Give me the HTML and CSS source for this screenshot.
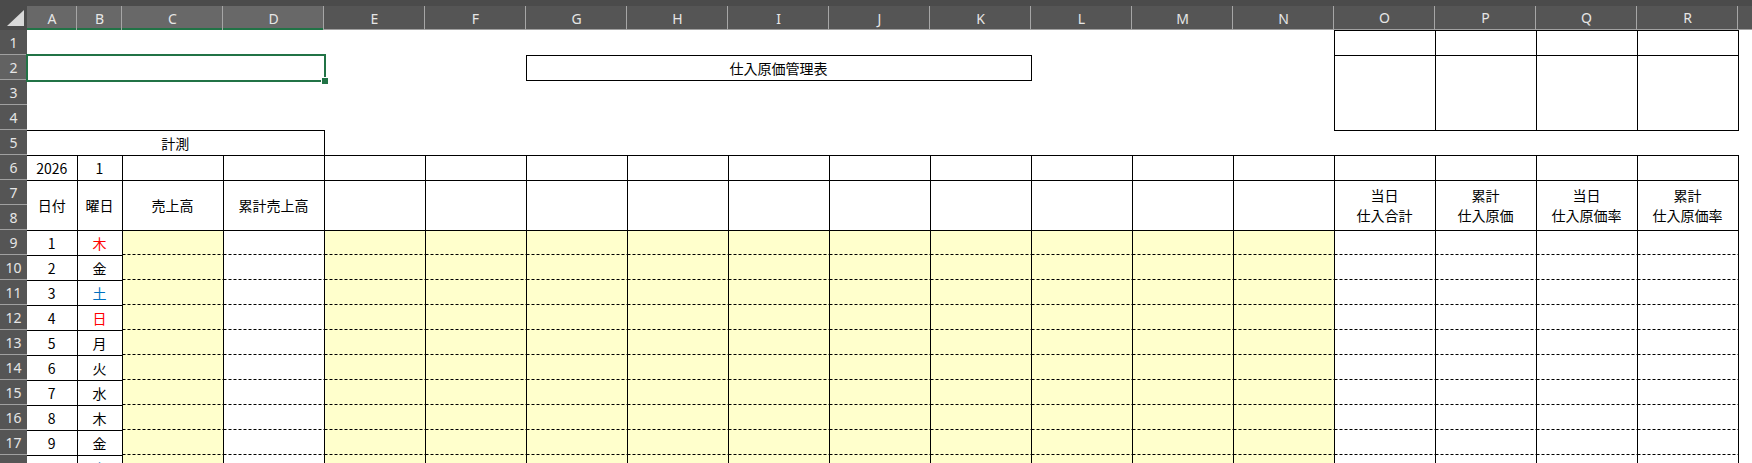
FILE: index.html
```html
<!DOCTYPE html>
<html lang="ja">
<head>
  <meta charset="UTF-8">
  <title>仕入原価管理表</title>
  <link rel="stylesheet" href="styles.css">
</head>
<body>
<div class="sheet">
  <table class="grid">
    <colgroup>
      <col class="c-hdr">
      <col class="c-a">
      <col class="c-b">
      <col class="c-wide" span="16">
      <col class="c-rest">
    </colgroup>
    <thead>
      <tr class="col-heads">
        <th class="corner"><span class="corner__tri"></span></th>
        <th class="col-head is-sel">A</th>
        <th class="col-head is-sel">B</th>
        <th class="col-head is-sel">C</th>
        <th class="col-head is-sel">D</th>
        <th class="col-head">E</th>
        <th class="col-head">F</th>
        <th class="col-head">G</th>
        <th class="col-head">H</th>
        <th class="col-head">I</th>
        <th class="col-head">J</th>
        <th class="col-head">K</th>
        <th class="col-head">L</th>
        <th class="col-head">M</th>
        <th class="col-head">N</th>
        <th class="col-head">O</th>
        <th class="col-head">P</th>
        <th class="col-head">Q</th>
        <th class="col-head">R</th>
        <th class="col-head col-head--end"></th>
      </tr>
    </thead>
    <tbody>
      <tr>
        <th class="row-head">1</th>
        <td colspan="14"></td>
        <td class="b"></td><td class="b"></td><td class="b"></td><td class="b"></td>
        <td></td>
      </tr>
      <tr>
        <th class="row-head is-sel">2</th>
        <td colspan="4"></td>
        <td colspan="2"></td>
        <td colspan="5" class="b">仕入原価管理表</td>
        <td colspan="3"></td>
        <td class="b" rowspan="3"></td><td class="b" rowspan="3"></td><td class="b" rowspan="3"></td><td class="b" rowspan="3"></td>
        <td></td>
      </tr>
      <tr>
        <th class="row-head">3</th>
        <td colspan="14"></td>
        <td></td>
      </tr>
      <tr>
        <th class="row-head">4</th>
        <td colspan="14"></td>
        <td></td>
      </tr>
      <tr>
        <th class="row-head">5</th>
        <td colspan="4" class="b nl">計測</td>
        <td colspan="14"></td>
        <td></td>
      </tr>
      <tr>
        <th class="row-head">6</th>
        <td class="b nl">2026</td>
        <td class="b">1</td>
        <td class="b"></td><td class="b"></td>
        <td class="b"></td><td class="b"></td><td class="b"></td><td class="b"></td><td class="b"></td>
        <td class="b"></td><td class="b"></td><td class="b"></td><td class="b"></td><td class="b"></td>
        <td class="b"></td><td class="b"></td><td class="b"></td><td class="b"></td>
        <td></td>
      </tr>
      <tr>
        <th class="row-head">7</th>
        <td rowspan="2" class="b nl">日付</td>
        <td rowspan="2" class="b">曜日</td>
        <td rowspan="2" class="b">売上高</td>
        <td rowspan="2" class="b">累計売上高</td>
        <td rowspan="2" class="b"></td><td rowspan="2" class="b"></td><td rowspan="2" class="b"></td><td rowspan="2" class="b"></td><td rowspan="2" class="b"></td>
        <td rowspan="2" class="b"></td><td rowspan="2" class="b"></td><td rowspan="2" class="b"></td><td rowspan="2" class="b"></td><td rowspan="2" class="b"></td>
        <td rowspan="2" class="b two-line">当日<br>仕入合計</td>
        <td rowspan="2" class="b two-line">累計<br>仕入原価</td>
        <td rowspan="2" class="b two-line">当日<br>仕入原価率</td>
        <td rowspan="2" class="b two-line">累計<br>仕入原価率</td>
        <td rowspan="2"></td>
      </tr>
      <tr>
        <th class="row-head">8</th>
      </tr>
      <tr>
        <th class="row-head">9</th>
        <td class="day">1</td><td class="wd red">木</td>
        <td class="in"></td><td class="out"></td>
        <td class="in"></td><td class="in"></td><td class="in"></td><td class="in"></td><td class="in"></td>
        <td class="in"></td><td class="in"></td><td class="in"></td><td class="in"></td><td class="in"></td>
        <td class="out"></td><td class="out"></td><td class="out"></td><td class="out"></td>
        <td></td>
      </tr>
      <tr>
        <th class="row-head">10</th>
        <td class="day">2</td><td class="wd">金</td>
        <td class="in"></td><td class="out"></td>
        <td class="in"></td><td class="in"></td><td class="in"></td><td class="in"></td><td class="in"></td>
        <td class="in"></td><td class="in"></td><td class="in"></td><td class="in"></td><td class="in"></td>
        <td class="out"></td><td class="out"></td><td class="out"></td><td class="out"></td>
        <td></td>
      </tr>
      <tr>
        <th class="row-head">11</th>
        <td class="day">3</td><td class="wd blue">土</td>
        <td class="in"></td><td class="out"></td>
        <td class="in"></td><td class="in"></td><td class="in"></td><td class="in"></td><td class="in"></td>
        <td class="in"></td><td class="in"></td><td class="in"></td><td class="in"></td><td class="in"></td>
        <td class="out"></td><td class="out"></td><td class="out"></td><td class="out"></td>
        <td></td>
      </tr>
      <tr>
        <th class="row-head">12</th>
        <td class="day">4</td><td class="wd red">日</td>
        <td class="in"></td><td class="out"></td>
        <td class="in"></td><td class="in"></td><td class="in"></td><td class="in"></td><td class="in"></td>
        <td class="in"></td><td class="in"></td><td class="in"></td><td class="in"></td><td class="in"></td>
        <td class="out"></td><td class="out"></td><td class="out"></td><td class="out"></td>
        <td></td>
      </tr>
      <tr>
        <th class="row-head">13</th>
        <td class="day">5</td><td class="wd">月</td>
        <td class="in"></td><td class="out"></td>
        <td class="in"></td><td class="in"></td><td class="in"></td><td class="in"></td><td class="in"></td>
        <td class="in"></td><td class="in"></td><td class="in"></td><td class="in"></td><td class="in"></td>
        <td class="out"></td><td class="out"></td><td class="out"></td><td class="out"></td>
        <td></td>
      </tr>
      <tr>
        <th class="row-head">14</th>
        <td class="day">6</td><td class="wd">火</td>
        <td class="in"></td><td class="out"></td>
        <td class="in"></td><td class="in"></td><td class="in"></td><td class="in"></td><td class="in"></td>
        <td class="in"></td><td class="in"></td><td class="in"></td><td class="in"></td><td class="in"></td>
        <td class="out"></td><td class="out"></td><td class="out"></td><td class="out"></td>
        <td></td>
      </tr>
      <tr>
        <th class="row-head">15</th>
        <td class="day">7</td><td class="wd">水</td>
        <td class="in"></td><td class="out"></td>
        <td class="in"></td><td class="in"></td><td class="in"></td><td class="in"></td><td class="in"></td>
        <td class="in"></td><td class="in"></td><td class="in"></td><td class="in"></td><td class="in"></td>
        <td class="out"></td><td class="out"></td><td class="out"></td><td class="out"></td>
        <td></td>
      </tr>
      <tr>
        <th class="row-head">16</th>
        <td class="day">8</td><td class="wd">木</td>
        <td class="in"></td><td class="out"></td>
        <td class="in"></td><td class="in"></td><td class="in"></td><td class="in"></td><td class="in"></td>
        <td class="in"></td><td class="in"></td><td class="in"></td><td class="in"></td><td class="in"></td>
        <td class="out"></td><td class="out"></td><td class="out"></td><td class="out"></td>
        <td></td>
      </tr>
      <tr>
        <th class="row-head">17</th>
        <td class="day">9</td><td class="wd">金</td>
        <td class="in"></td><td class="out"></td>
        <td class="in"></td><td class="in"></td><td class="in"></td><td class="in"></td><td class="in"></td>
        <td class="in"></td><td class="in"></td><td class="in"></td><td class="in"></td><td class="in"></td>
        <td class="out"></td><td class="out"></td><td class="out"></td><td class="out"></td>
        <td></td>
      </tr>
      <tr>
        <th class="row-head">18</th>
        <td class="day">10</td><td class="wd blue">土</td>
        <td class="in"></td><td class="out"></td>
        <td class="in"></td><td class="in"></td><td class="in"></td><td class="in"></td><td class="in"></td>
        <td class="in"></td><td class="in"></td><td class="in"></td><td class="in"></td><td class="in"></td>
        <td class="out"></td><td class="out"></td><td class="out"></td><td class="out"></td>
        <td></td>
      </tr>
    </tbody>
  </table>

  <!-- active selection A2:D2 -->
  <div class="selection"><span class="selection__handle"></span></div>
</div>
</body>
</html>
```

FILE: styles.css
```css
body {
  margin: 0;
  padding: 0;
  background: white;
  overflow: hidden;
  font-family: "Noto Sans CJK JP", "Noto Sans", sans-serif;
}
.sheet {
  position: relative;
  width: 1752px;
}
.grid {
  width: 1752px;
  border-collapse: collapse;
  table-layout: fixed;
  font-size: 14px;
  color: #000;
}
.c-hdr { width: 27px; }
.c-a { width: 50px; }
.c-b { width: 45px; }
.c-wide { width: 101px; }
.c-rest { width: 14px; }

.grid tr {
  height: 25px;
}
.grid td {
  padding: 0;
  text-align: center;
  vertical-align: middle;
  white-space: nowrap;
  line-height: 20px;
}

/* column letters */
.grid .col-heads {
  height: 30px;
}
.corner {
  position: relative;
  padding: 0;
  background: #4b4b4b;
}
.corner__tri {
  position: absolute;
  right: 3px;
  bottom: 4px;
  width: 17px;
  height: 16px;
  background: #d9d9d9;
  clip-path: polygon(100% 0, 100% 100%, 0 100%);
}
.col-head {
  position: relative;
  padding: 6px 0 0;
  background: linear-gradient(#4b4b4b 6px, #555555 6px);
  color: #e6e6e6;
  font: normal 14px "Noto Sans", sans-serif;
  box-shadow: inset 0 -1px #a0a0a0;
}
.col-head::after {
  content: "";
  position: absolute;
  right: 0;
  top: 6px;
  bottom: 0;
  width: 1px;
  background: #a6a6a6;
}
.col-head.is-sel {
  background: linear-gradient(#4b4b4b 6px, #686868 6px);
  box-shadow: inset 0 -2px #217346;
}
.col-head--end::after {
  display: none;
}

/* row numbers */
.row-head {
  padding: 0;
  background: #555555;
  color: #e6e6e6;
  font: normal 14px "Noto Sans", sans-serif;
  text-align: center;
  box-shadow: inset 0 -1px #a0a0a0;
}
.row-head.is-sel {
  background: #626262;
}

/* bordered cells */
.b {
  border: 1px solid #000;
}
.nl {
  border-left: none;
}
.two-line {
  line-height: 24px;
}

/* daily rows */
.day,
.wd {
  border: 1px solid #000;
}
.day {
  border-left: none;
}
.in,
.out {
  border-left: 1px solid #000;
  border-right: 1px solid #000;
  background: linear-gradient(to right, #000 3px, transparent 3px) left bottom / 5px 1px repeat-x;
}
.in {
  background-color: #ffffcc;
}
.red { color: #ff0000; }
.blue { color: #0070c0; }

/* selection box */
.selection {
  position: absolute;
  left: 26px;
  top: 54px;
  width: 300px;
  height: 28px;
  border: 2px solid #217346;
  box-sizing: border-box;
}
.selection__handle {
  position: absolute;
  right: -4px;
  bottom: -4px;
  width: 6px;
  height: 6px;
  background: #217346;
  border-left: 1px solid #fff;
  border-top: 1px solid #fff;
}
```
